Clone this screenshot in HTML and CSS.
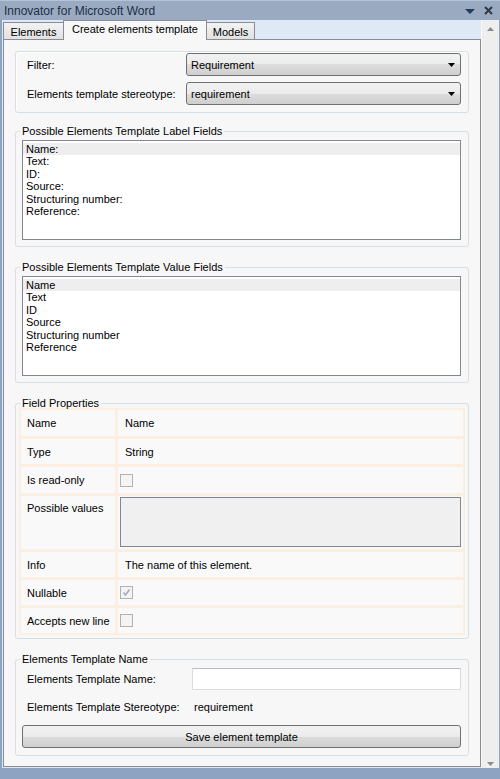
FILE: index.html
```html
<!DOCTYPE html>
<html>
<head>
<meta charset="utf-8">
<link rel="stylesheet" href="styles.css">
</head>
<body>
<div class="window">
  <div class="titlebar">
    <span class="title">Innovator for Microsoft Word</span>
    <span class="title-icons">
      <svg class="menu-arrow" width="10" height="6" viewBox="0 0 10 6"><path d="M0 0H10L5 5Z" fill="#1f3b66"/></svg>
      <svg class="close-x" width="9" height="9" viewBox="0 0 9 9"><path d="M1 1L8 8M8 1L1 8" stroke="#2e3846" stroke-width="2"/></svg>
    </span>
  </div>
  <div class="frame">
    <div class="body">
      <div class="main">
        <div class="tabs">
          <div class="tab tab-elements">Elements</div>
          <div class="tab tab-active">Create elements template</div>
          <div class="tab tab-models">Models</div>
        </div>
        <div class="panel">
          <div class="group-plain">
            <span class="lbl">Filter:</span>
            <div class="combo"><span>Requirement</span><svg width="7" height="4" viewBox="0 0 7 4"><path d="M0 0H7L3.5 4Z" fill="#000"/></svg></div>
            <span class="lbl">Elements template stereotype:</span>
            <div class="combo"><span>requirement</span><svg width="7" height="4" viewBox="0 0 7 4"><path d="M0 0H7L3.5 4Z" fill="#000"/></svg></div>
          </div>

          <fieldset class="grp grp-list">
            <legend>Possible Elements Template Label Fields</legend>
            <div class="listbox">
              <div class="item sel">Name:</div>
              <div class="item">Text:</div>
              <div class="item">ID:</div>
              <div class="item">Source:</div>
              <div class="item">Structuring number:</div>
              <div class="item">Reference:</div>
            </div>
          </fieldset>

          <fieldset class="grp grp-list">
            <legend>Possible Elements Template Value Fields</legend>
            <div class="listbox">
              <div class="item sel">Name</div>
              <div class="item">Text</div>
              <div class="item">ID</div>
              <div class="item">Source</div>
              <div class="item">Structuring number</div>
              <div class="item">Reference</div>
            </div>
          </fieldset>

          <fieldset class="grp grp-props">
            <legend>Field Properties</legend>
            <div class="props">
              <div class="pl">Name</div><div class="pv">Name</div>
              <div class="pl">Type</div><div class="pv">String</div>
              <div class="pl">Is read-only</div><div class="pv pv-ctl"><span class="chk"></span></div>
              <div class="pl pl-top">Possible values</div><div class="pv pv-area"><div class="area"></div></div>
              <div class="pl">Info</div><div class="pv">The name of this element.</div>
              <div class="pl">Nullable</div><div class="pv pv-ctl"><span class="chk"><svg width="11" height="11" viewBox="0 0 11 11"><path d="M2.5 5.5L4.5 8L8.5 2.5" fill="none" stroke="#a6adbd" stroke-width="1.6"/></svg></span></div>
              <div class="pl">Accepts new line</div><div class="pv pv-ctl"><span class="chk"></span></div>
            </div>
          </fieldset>

          <fieldset class="grp grp-name">
            <legend>Elements Template Name</legend>
            <div class="name-row">
              <span class="lbl2">Elements Template Name:</span>
              <div class="textbox"></div>
            </div>
            <div class="name-row row-stereo">
              <span class="lbl2">Elements Template Stereotype:</span>
              <span class="stereo-val">requirement</span>
            </div>
            <div class="button">Save element template</div>
          </fieldset>
        </div>
      </div>
      <div class="scrollbar">
        <svg width="7" height="4" viewBox="0 0 7 4"><path d="M0 4H7L3.5 0Z" fill="#8a8a8a"/></svg>
        <svg width="7" height="4" viewBox="0 0 7 4"><path d="M0 0H7L3.5 4Z" fill="#8a8a8a"/></svg>
      </div>
    </div>
  </div>
</div>
</body>
</html>
```

FILE: styles.css
```css
* { box-sizing: border-box; }
html, body { margin: 0; padding: 0; background: #fff; }
body { font-family: "Liberation Sans", Arial, sans-serif; font-size: 11px; color: #000; }

.window { width: 500px; height: 779px; display: flex; flex-direction: column; background: #8ea3c1; }

.titlebar { height: 20px; display: flex; align-items: center; justify-content: space-between; background: #9aabc1; border-top: 1px solid #b4c3d7; padding: 0 7px 0 4px; }
.title { font-size: 12px; color: #1d2e46; }
.title-icons { display: flex; align-items: center; gap: 9px; }
.menu-arrow { margin-top: 2px; }

.frame { flex: 1; display: flex; flex-direction: column; padding: 0 1px 11px 2px; }
.body { flex: 1; display: flex; background: #dfe9f6; }
.main { flex: 1; display: flex; flex-direction: column; padding-left: 1px; }

.tabs { height: 19px; display: flex; align-items: flex-end; padding-left: 0; position: relative; z-index: 1; }
.tab { height: 17px; border: 1px solid #898c95; border-bottom: none; background: linear-gradient(#f3f3f3, #e1e1e1); display: flex; align-items: center; justify-content: center; padding-top: 2px; font-size: 11px; }
.tab-elements { width: 60px; border-right: none; }
.tab-active { width: 144px; height: 20px; margin-bottom: -1px; background: #f7f7f7; padding-top: 0; padding-bottom: 3px; }
.tab-models { width: 48px; border-left: none; }

.panel { flex: 1; margin-bottom: 1px; border: 1px solid #898c95; background: #f7f7f7; padding: 0 11px; display: flex; flex-direction: column; }

.group-plain { margin-top: 11px; border: 1px solid #d5dfe5; border-radius: 3px; padding: 1px 7px 7px 11px; display: grid; grid-template-columns: 159px 1fr; row-gap: 6px; align-items: center; box-shadow: inset 1px 1px 0 #fff; }
.combo { height: 23px; border: 1px solid #707070; border-radius: 3px; background: linear-gradient(#f2f2f2 0%, #ebebeb 50%, #dddddd 50%, #cfcfcf 100%); display: flex; align-items: center; justify-content: space-between; padding: 0 5px 0 4px; }

.grp { margin: 14px 0 0; border: 1px solid #d5dfe5; border-radius: 3px; min-width: 0; }
.grp legend { padding: 0 2px; height: 13px; line-height: 13px; font-size: 11px; }
.grp-list { margin-top: 12px; padding: 0 7px 6px 4px; }
.grp-list + .grp-list { margin-top: 14px; }

.listbox { margin: 2px 0 0 2px; height: 100px; border: 1px solid #828790; background: #fff; padding-top: 2px; }
.item { height: 12.4px; line-height: 12.4px; padding-left: 3px; }
.item.sel { background: #eeeeee; }

.grp-props { padding: 0 3px 3px 3px; }
.grp-props legend { margin-left: 1px; }
.props { margin-top: -2px; display: grid; grid-template-columns: 94px 1fr; grid-template-rows: 26px 25px 26px 53px 25px 25px 25px; gap: 3px; padding: 2px; background: #fcefe2; }
.pl { background: #f9f9f9; display: flex; align-items: center; padding-left: 6px; }
.pl-top { align-items: flex-start; padding-top: 6px; }
.pv { background: #f9f9f9; display: flex; align-items: center; padding-left: 7px; }
.pv-ctl { padding-left: 2px; }
.pv-area { padding: 1px 2px 2px 2px; align-items: stretch; }
.area { flex: 1; background: #f0f0f0; border: 1px solid #82868f; }
.chk { width: 13px; height: 13px; border: 1px solid #b1b1b1; background: #f4f4f4; display: flex; align-items: center; justify-content: center; }

.grp-name { padding: 0 7px 7px 4px; }
.name-row { margin: 2px 0 0 2px; height: 22px; display: grid; grid-template-columns: 165px 1fr; align-items: center; padding-left: 5px; }
.row-stereo { margin-top: 7px; height: 20px; }
.textbox { height: 22px; border: 1px solid #dadce2; border-top-color: #b9bcc4; background: #fff; }
.stereo-val { padding-left: 2px; }
.button { margin: 8px 0 0 2px; height: 23px; border: 1px solid #707070; border-radius: 3px; background: linear-gradient(#f2f2f2 0%, #ebebeb 50%, #dddddd 50%, #cfcfcf 100%); display: flex; align-items: center; justify-content: center; }

.scrollbar { width: 18px; background: #eeeeee; border-left: 1px solid #f8f8f8; display: flex; flex-direction: column; justify-content: space-between; align-items: center; padding: 7px 0 2px; }
```
